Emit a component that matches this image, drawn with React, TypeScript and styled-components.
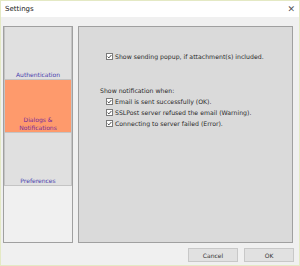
import { createGlobalStyle, styled } from "styled-components";

const GlobalStyle = createGlobalStyle`
  html, body {
    margin: 0;
    padding: 0;
    background: #f0f0f0;
  }
`;

const Check = () => (
  <svg width="7" height="7" viewBox="0 0 7 7">
    <rect x="0.5" y="0.5" width="6" height="6" fill="#ffffff" stroke="#7a7a7a" />
    <path d="M1.6 3.6 L2.9 4.9 L5.4 2" fill="none" stroke="#333333" strokeWidth="0.9" />
  </svg>
);

const App = () => {
  return (
    <Window>
      <GlobalStyle />
      <TitleBar>
        <Title>Settings</Title>
        <Close>✕</Close>
      </TitleBar>
      <Body>
        <SideNav>
          <NavItem>Authentication</NavItem>
          <NavItem $active>
            Dialogs &amp;
            <br />
            Notifications
          </NavItem>
          <NavItem>Preferences</NavItem>
        </SideNav>
        <Panel>
          <CheckRow $top>
            <Check />
            <span>Show sending popup, if attachment(s) included.</span>
          </CheckRow>
          <SectionLabel>Show notification when:</SectionLabel>
          <CheckRow>
            <Check />
            <span>Email is sent successfully (OK).</span>
          </CheckRow>
          <CheckRow>
            <Check />
            <span>SSLPost server refused the email (Warning).</span>
          </CheckRow>
          <CheckRow>
            <Check />
            <span>Connecting to server failed (Error).</span>
          </CheckRow>
        </Panel>
      </Body>
      <Footer>
        <Button>Cancel</Button>
        <Button>OK</Button>
      </Footer>
    </Window>
  );
};

export default App;

const Window = styled.div`
  width: 300px;
  height: 266px;
  box-sizing: border-box;
  border: 1px solid #e4e9c4;
  background: #f0f0f0;
  display: flex;
  flex-direction: column;
  font-family: "DejaVu Sans", "Liberation Sans", sans-serif;
`;

const TitleBar = styled.div`
  height: 16px;
  background: #ffffff;
  display: flex;
  align-items: center;
  justify-content: space-between;
  padding: 0 4px 0 4px;
`;

const Title = styled.div`
  font-size: 7px;
  color: #1a1a1a;
`;

const Close = styled.div`
  font-size: 9px;
  color: #555555;
`;

const Body = styled.div`
  display: flex;
  gap: 5px;
  padding: 9px 6px 0 2px;
  height: 217px;
`;

const SideNav = styled.div`
  width: 70px;
  box-sizing: border-box;
  border: 1px solid #a0a0a0;
  background: #f0f0f0;
  display: flex;
  flex-direction: column;
`;

const NavItem = styled.div<{ $active?: boolean }>`
  height: 53px;
  box-sizing: border-box;
  border: 1px solid #c4c4c4;
  border-top: none;
  background: ${(p) => (p.$active ? "#fe9a6c" : "#e0e0e0")};
  color: ${(p) => (p.$active ? "#7a2a9a" : "#4b3fae")};
  font-size: 6px;
  line-height: 7.5px;
  text-align: center;
  display: flex;
  flex-direction: column;
  justify-content: flex-end;
  padding-bottom: 1px;
`;

const Panel = styled.div`
  flex: 1;
  box-sizing: border-box;
  border: 1px solid #a0a0a0;
  background: #dadada;
  padding: 24px 0 0 21px;
  font-size: 6.2px;
  color: #2a2a2a;
`;

const CheckRow = styled.div<{ $top?: boolean }>`
  display: flex;
  align-items: center;
  gap: 2px;
  height: 11px;
  margin-left: 6px;
  margin-bottom: ${(p) => (p.$top ? "23px" : "0")};
`;

const SectionLabel = styled.div`
  height: 11px;
  display: flex;
  align-items: center;
`;

const Footer = styled.div`
  display: flex;
  justify-content: flex-end;
  gap: 6px;
  padding: 5px 5px 0 0;
`;

const Button = styled.button`
  width: 50px;
  height: 14px;
  box-sizing: border-box;
  border: 1px solid #c8c8c8;
  background: #e1e1e1;
  font-family: "DejaVu Sans", "Liberation Sans", sans-serif;
  font-size: 6px;
  color: #333333;
  padding: 0;
`;
